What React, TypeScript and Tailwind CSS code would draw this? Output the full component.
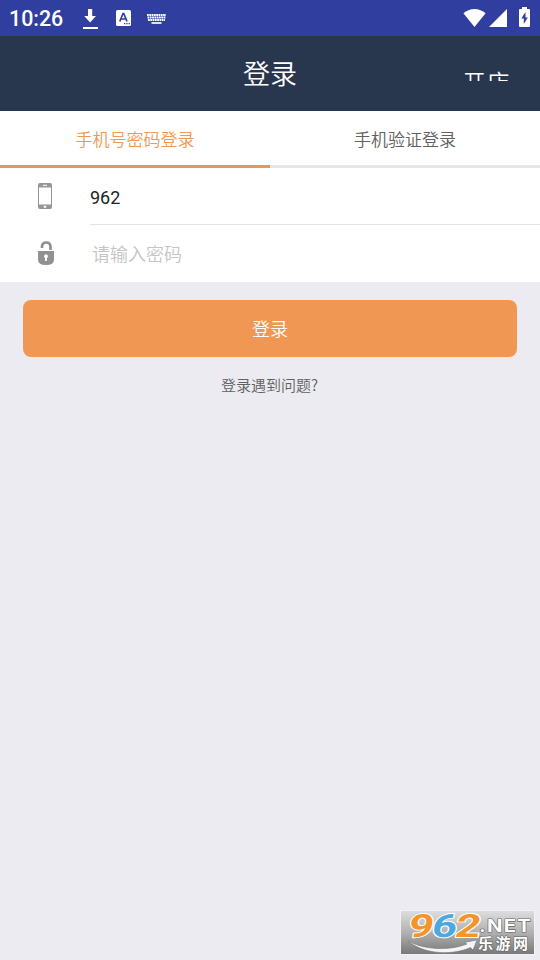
import { useState } from 'react';

const StatusBar = () => {
    return (
        <div className="flex h-9 items-center bg-[#303f9f] pl-[9px] pr-[10px] text-white">
            <span className="w-[73px] pt-px font-[Roboto] text-[21.400px] leading-none font-medium">10:26</span>
            <svg className="mt-px h-5 w-4" viewBox="0 0 16 20" fill="currentColor">
                <path d="M6 0h4.200v7h3.800l-5.900 6.500L2.200 7H6zM1 18h15v2H1z" />
            </svg>
            <svg className="ml-[18px] h-4 w-[15px]" viewBox="0 0 15 16">
                <rect width="15" height="16" rx="1.500" fill="#fff" />
                <path d="M3.800 11.500 7 3.500h.8l3.200 8M5 9h4.800" fill="none" stroke="#303f9f" strokeWidth="1.700" />
                <path d="M8 13h1.300v1.300H8zM10.300 13h1.300v1.300h-1.300zM12.600 13h1.300v1.300h-1.300z" fill="#303f9f" />
            </svg>
            <svg className="mt-px ml-4 h-[10px] w-[19px]" viewBox="0 0 19 10" fill="none" stroke="currentColor">
                <path d="M0 1h19M.5 3.500h18M1 6h17" strokeWidth="1.900" strokeDasharray="1.800 .5" />
                <path d="M4.500 9h10" strokeWidth="1.700" />
            </svg>
            <div className="ml-auto flex items-center">
                <svg className="h-[18px] w-[23px]" viewBox="0 0 23 18" fill="currentColor">
                    <path d="M11.500 18 .4 4.300C3.500 1.600 7.300 0 11.500 0s8 1.600 11.100 4.300z" />
                </svg>
                <svg className="ml-[3px] h-[18px] w-[18px]" viewBox="0 0 18 18" fill="currentColor">
                    <path d="M18 0v18H0z" />
                </svg>
                <svg className="-mt-0.5 ml-3 h-5 w-[11px]" viewBox="0 0 11 20">
                    <path d="M3 0h5v2h2q1 0 1 1v16q0 1-1 1H1q-1 0-1-1V3q0-1 1-1h2z" fill="#fff" />
                    <path d="M6.500 5 2.300 11.500h2.500V17l4-6.500H6.500z" fill="#303f9f" />
                </svg>
            </div>
        </div>
    );
};

const PhoneIcon = () => {
    return (
        <svg className="h-[26px] w-[14px]" viewBox="0 0 14 26">
            <rect width="14" height="26" rx="2" fill="#969696" />
            <path d="M1 4.500h12v17H1z" fill="#fff" />
            <path d="M5 2.300h4" stroke="#fff" strokeWidth="1" />
            <rect x="5.700" y="22.700" width="2.600" height="2" rx=".6" fill="#fff" />
        </svg>
    );
};

const LockIcon = () => {
    return (
        <svg className="h-6 w-4" viewBox="0 0 16 24">
            <path d="M4 7V5.800C4 3 5.600 1.500 8.300 1.500S12.500 3 12.500 6v3" fill="none" stroke="#919191" strokeWidth="2.700" />
            <path d="M0 10h16v8.500Q16 24 8 24T0 18.500z" fill="#919191" />
            <path d="M8 13.200a2 2 0 0 1 1 3.700V20H7v-3.100a2 2 0 0 1 1-3.700z" fill="#fff" />
        </svg>
    );
};

const Watermark = () => {
    return (
        <svg className="absolute top-[910px] left-[400px] h-[45px] w-[135px]" viewBox="0 0 135 45">
            <defs>
                <linearGradient id="plate" x1="0" y1="0" x2="0" y2="1">
                    <stop offset="0" stopColor="#dedee0" />
                    <stop offset=".5" stopColor="#b1b1b2" />
                    <stop offset="1" stopColor="#777" />
                </linearGradient>
            </defs>
            <rect x=".5" y=".5" width="134" height="44" fill="url(#plate)" stroke="#f2f2f4" />
            <path d="M8 31c17 9 41 10 59 3l-3-1.500 13-2.500-4 10-2.500-2.500C52 46 23 44 8 31z" fill="#f5f5f5" stroke="#777" strokeWidth=".6" />
            <g
                className="font-[Roboto] text-[32px] font-bold"
                transform="translate(7 27) skewX(-10)"
                stroke="#fff"
                strokeWidth="2"
                strokeLinejoin="round"
                paintOrder="stroke"
            >
                <text textLength="25" lengthAdjust="spacingAndGlyphs" fill="#f59427">9</text>
                <text x="23.500" textLength="25" lengthAdjust="spacingAndGlyphs" fill="#4ba9df">6</text>
                <text x="47" textLength="25" lengthAdjust="spacingAndGlyphs" fill="#f59427">2</text>
            </g>
            <g fill="#fff" stroke="#666" strokeWidth="1.200" paintOrder="stroke" strokeLinejoin="round">
                <text x="79" y="21.500" textLength="53" lengthAdjust="spacingAndGlyphs" className="font-[Inter] text-[17px] font-bold tracking-[1px]">.NET</text>
                <text x="78" y="39" textLength="50" className="font-['Noto_Sans_CJK_SC',sans-serif] text-[15px] font-bold">乐游网</text>
            </g>
        </svg>
    );
};

const tabs = ['手机号密码登录', '手机验证登录'];

const App = () => {
    const [activeTab, setActiveTab] = useState(0);
    const [phone, setPhone] = useState('962');
    const [password, setPassword] = useState('');

    return (
        <div className="relative h-[960px] w-[540px] overflow-hidden bg-[#ebebf1] font-['Noto_Sans_CJK_SC',sans-serif] font-[350]">
            <StatusBar />
            <header className="grid h-[75px] grid-cols-3 items-center bg-[#29374e] text-white">
                <h1 className="col-start-2 pb-[3px] text-center text-[27px] leading-none font-[350]">登录</h1>
                <div className="mr-[29px] h-[15px] justify-self-end overflow-hidden pt-[3px] text-[22.500px] leading-6 tracking-[1.500px]">开店</div>
            </header>
            <nav className="grid h-[57px] grid-cols-2 bg-white">
                {
                    tabs.map((tab, index) => {
                        return (
                            <button
                                className={`border-b-3 pt-0.5 text-[17px]
                                ${activeTab === index ? 'border-[#e99557] text-[#f09853]' : 'border-[#e6e6e6] text-[#606060]'}`}
                                key={index}
                                onClick={() => setActiveTab(index)}
                            >
                                {tab}
                            </button>
                        )
                    })
                }
            </nav>
            <form className="bg-white">
                <label className="flex h-[57px]">
                    <span className="w-[90px] pt-[15px] pl-[38px]"><PhoneIcon /></span>
                    <input
                        className="min-w-0 flex-1 border-b border-[#e3e3e3] pt-[3px] font-[Roboto] text-[18px] font-normal text-[#222] outline-none"
                        value={phone}
                        onChange={(e) => setPhone(e.target.value)}
                    />
                </label>
                <label className="flex h-[57px]">
                    <span className="w-[92px] pt-4 pl-[38px]"><LockIcon /></span>
                    <input
                        className="min-w-0 flex-1 text-[18px] outline-none placeholder:text-[#c5c5c5]"
                        type="password"
                        placeholder="请输入密码"
                        value={password}
                        onChange={(e) => setPassword(e.target.value)}
                    />
                </label>
            </form>
            <div className="flex flex-col items-center px-[23px] pt-[18px]">
                <button className="h-[57px] w-full rounded-lg bg-[#f09853] text-[18px] text-white">登录</button>
                <a className="mt-[17px] mr-px text-[15px] text-[#606060]">登录遇到问题?</a>
            </div>
            <Watermark />
        </div>
    );
};

export default App;
